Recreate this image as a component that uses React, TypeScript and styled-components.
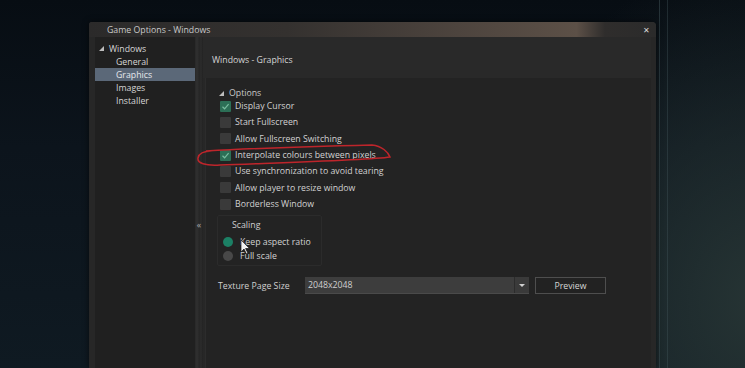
import React from "react";
import styled, { createGlobalStyle } from "styled-components";

const Global = createGlobalStyle`
  html, body { margin: 0; padding: 0; }
  body {
    width: 745px; height: 368px; overflow: hidden;
    font-family: "Open Sans", "Noto Sans", sans-serif;
    background: #0b1118;
  }
`;

const FS = "8.75px";

const Stage = styled.div`
  position: relative;
  width: 745px;
  height: 368px;
  box-sizing: border-box;
  padding: 22px 0 0 89px;
  overflow: hidden;
  background:
    linear-gradient(90deg, transparent 659px, rgba(70,90,95,0.45) 659px, rgba(70,90,95,0.45) 660px, transparent 660px,
      transparent 667px, rgba(70,90,95,0.35) 667px, rgba(70,90,95,0.35) 668px, transparent 668px),
    radial-gradient(ellipse 280px 340px at 760px 300px, #263434 0%, rgba(20,32,36,0) 100%),
    linear-gradient(180deg, #070d13 0%, #0c141c 40%, #0f1a22 100%);
`;

const Window = styled.div`
  width: 567px;
  height: 346px;
  display: flex;
  flex-direction: column;
  background: #2a2a2a;
  border-radius: 3px 4px 0 0;
  box-shadow: 0 0 6px rgba(0,0,0,0.6);
  overflow: hidden;
`;

const TitleBar = styled.div`
  height: 15px;
  flex: none;
  display: flex;
  align-items: center;
  justify-content: space-between;
  padding: 1px 6px 0 18px;
  box-sizing: border-box;
  background: linear-gradient(90deg, #2b2a2a 0%, #34312f 35%, #4d443e 65%, #5c5047 86%, #2f2d2c 91%, #2b2b2b 100%);
  color: #c9c9c9;
  font-size: ${FS};
`;

const Close = styled.span`
  color: #d8d8d8;
  font-size: 8px;
  line-height: 1;
`;

const Body = styled.div`
  flex: 1;
  display: flex;
  padding: 0 5px 0 6px;
  background: #272727;
`;

const Tree = styled.div`
  width: 100px;
  flex: none;
  padding-top: 5px;
  background: #202020;
  display: flex;
  flex-direction: column;
`;

const TreeRow = styled.div<{ $indent: number; $selected?: boolean }>`
  height: 13px;
  display: flex;
  align-items: center;
  padding-left: ${(p) => p.$indent}px;
  font-size: ${FS};
  color: ${(p) => (p.$selected ? "#e6e9ee" : "#d6d6d6")};
  background: ${(p) => (p.$selected ? "#5b6878" : "transparent")};
  white-space: nowrap;
`;

const Tri = styled.span`
  width: 0; height: 0;
  border-left: 5px solid transparent;
  border-bottom: 5px solid #bdbdbd;
  margin-right: 5px;
`;

const Splitter = styled.div`
  width: 8px;
  flex: none;
  display: flex;
  flex-direction: column;
  align-items: center;
  padding-top: 181px;
  background: linear-gradient(90deg, #262626 0px, #2e2e2e 1px, #2e2e2e 3px, #252525 4px, #2c2c2c 6px, #222 8px);
  color: #a8a8a8;
  font-size: 9px;
`;

const Right = styled.div`
  flex: 1;
  display: flex;
  flex-direction: column;
`;

const Header = styled.div`
  height: 41px;
  flex: none;
  display: flex;
  align-items: center;
  padding-left: 9px;
  padding-top: 5px;
  box-sizing: border-box;
  background: #292929;
  color: #d4d4d4;
  font-size: ${FS};
`;

const Content = styled.div`
  flex: 1;
  margin-left: 2px;
  background: #232323;
  border-left: 1px solid #2c2c2c;
  padding: 9px 0 0 11px;
  display: flex;
  flex-direction: column;
`;

const SectionHead = styled.div`
  height: 12px;
  display: flex;
  align-items: center;
  padding-left: 2px;
  margin-bottom: -1px;
  color: #c8c8c8;
  font-size: ${FS};
`;

const CheckRow = styled.div`
  height: 16.33px;
  display: flex;
  align-items: center;
  padding-left: 3px;
  color: #d2d2d2;
  font-size: ${FS};
  white-space: nowrap;
`;

const Box = styled.span<{ $on?: boolean }>`
  width: 11px;
  height: 11px;
  margin-right: 4px;
  flex: none;
  border-radius: 1px;
  background: ${(p) => (p.$on ? "#2c6f56" : "#3a3a3a")};
  display: flex;
  align-items: center;
  justify-content: center;
`;

const Group = styled.div`
  margin-top: 3px;
  width: 105px;
  height: 51px;
  box-sizing: border-box;
  border: 1px solid #2b2b2b;
  border-radius: 2px;
  padding: 2px 0 0 5px;
  display: flex;
  flex-direction: column;
`;

const GroupTitle = styled.div`
  height: 14px;
  display: flex;
  align-items: center;
  padding-left: 9px;
  margin-bottom: 2px;
  color: #cfcfcf;
  font-size: ${FS};
`;

const RadioRow = styled.div`
  height: 14.5px;
  display: flex;
  align-items: center;
  color: #d2d2d2;
  font-size: ${FS};
  white-space: nowrap;
`;

const Radio = styled.span<{ $on?: boolean }>`
  width: 10px;
  height: 10px;
  border-radius: 50%;
  margin-right: 7px;
  background: ${(p) => (p.$on ? "#1c8065" : "#484848")};
`;

const FieldRow = styled.div`
  margin-top: 11px;
  height: 17px;
  display: flex;
  align-items: center;
`;

const FieldLabel = styled.span`
  width: 87px;
  padding-left: 1px;
  color: #d0d0d0;
  font-size: ${FS};
`;

const Select = styled.div`
  width: 224px;
  height: 16px;
  display: flex;
  background: #3d3d3d;
  border-bottom: 1px solid #4a4a4a;
  color: #cfcfcf;
  font-size: ${FS};
`;

const SelectValue = styled.span`
  flex: 1;
  display: flex;
  align-items: center;
  padding-left: 3px;
`;

const SelectArrow = styled.span`
  width: 14px;
  display: flex;
  align-items: center;
  justify-content: center;
  border-left: 1px solid #2c2c2c;
  background: #3a3a3a;
  &::after {
    content: "";
    border-left: 3px solid transparent;
    border-right: 3px solid transparent;
    border-top: 3px solid #d0d0d0;
  }
`;

const Button = styled.div`
  margin-left: 6px;
  width: 71px;
  height: 17px;
  box-sizing: border-box;
  border: 1px solid #4e4e4e;
  background: #222;
  color: #d6d6d6;
  font-size: ${FS};
  display: flex;
  align-items: center;
  justify-content: center;
`;

const Overlay = styled.svg`
  position: absolute;
  left: 0;
  top: 0;
  pointer-events: none;
`;

const Check = () => (
  <svg width="9" height="9" viewBox="0 0 9 9">
    <path d="M1.5 4.8 L3.6 6.8 L7.6 2.2" fill="none" stroke="#78bc9e" strokeWidth="1.2" />
  </svg>
);

const options: [string, boolean][] = [
  ["Display Cursor", true],
  ["Start Fullscreen", false],
  ["Allow Fullscreen Switching", false],
  ["Interpolate colours between pixels", true],
  ["Use synchronization to avoid tearing", false],
  ["Allow player to resize window", false],
  ["Borderless Window", false],
];

export default function App() {
  return (
    <>
      <Global />
      <Stage>
        <Window>
          <TitleBar>
            <span>Game Options - Windows</span>
            <Close>✕</Close>
          </TitleBar>
          <Body>
            <Tree>
              <TreeRow $indent={4}>
                <Tri />
                Windows
              </TreeRow>
              <TreeRow $indent={21}>General</TreeRow>
              <TreeRow $indent={21} $selected>Graphics</TreeRow>
              <TreeRow $indent={21}>Images</TreeRow>
              <TreeRow $indent={21}>Installer</TreeRow>
            </Tree>
            <Splitter>«</Splitter>
            <Right>
              <Header>Windows - Graphics</Header>
              <Content>
                <SectionHead>
                  <Tri />
                  Options
                </SectionHead>
                {options.map(([label, on]) => (
                  <CheckRow key={label}>
                    <Box $on={on}>{on && <Check />}</Box>
                    {label}
                  </CheckRow>
                ))}
                <Group>
                  <GroupTitle>Scaling</GroupTitle>
                  <RadioRow>
                    <Radio $on />
                    Keep aspect ratio
                  </RadioRow>
                  <RadioRow>
                    <Radio />
                    Full scale
                  </RadioRow>
                </Group>
                <FieldRow>
                  <FieldLabel>Texture Page Size</FieldLabel>
                  <Select>
                    <SelectValue>2048x2048</SelectValue>
                    <SelectArrow />
                  </Select>
                  <Button>Preview</Button>
                </FieldRow>
              </Content>
            </Right>
          </Body>
        </Window>
        <Overlay width="745" height="368" viewBox="0 0 745 368">
          <path
            d="M206 151 C 260 148, 330 146, 372 145 C 382 146, 388 152, 390 157 C 370 160, 300 162, 220 165 C 205 166, 197 163, 198 158 C 199 153, 203 151, 212 151"
            fill="none"
            stroke="#be252b"
            strokeWidth="1.5"
          />
          <path
            d="M241 240 L241 252 L244 249 L246.5 254 L248 253.3 L245.6 248.5 L249.6 248.5 Z"
            fill="#f2f2f2"
            stroke="#111"
            strokeWidth="0.7"
          />
        </Overlay>
      </Stage>
    </>
  );
}
